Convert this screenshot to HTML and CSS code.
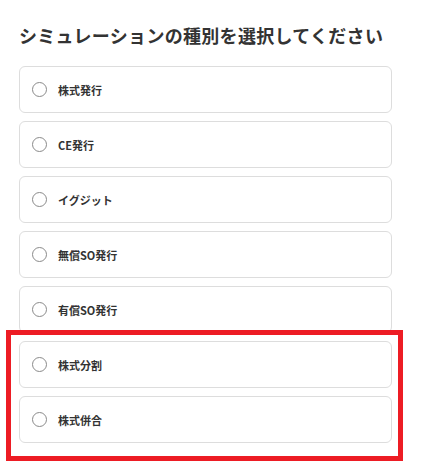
FILE: index.html
```html
<!DOCTYPE html>
<html lang="ja">
<head>
<meta charset="utf-8">
<link rel="stylesheet" href="styles.css">
</head>
<body>
<div class="page">
  <h1 class="title">シミュレーションの種別を選択してください</h1>
  <div class="options">
    <label class="option"><span class="radio"></span><span class="label">株式発行</span></label>
    <label class="option"><span class="radio"></span><span class="label">CE発行</span></label>
    <label class="option"><span class="radio"></span><span class="label">イグジット</span></label>
    <label class="option"><span class="radio"></span><span class="label">無償SO発行</span></label>
    <label class="option"><span class="radio"></span><span class="label">有償SO発行</span></label>
    <label class="option"><span class="radio"></span><span class="label">株式分割</span></label>
    <label class="option"><span class="radio"></span><span class="label">株式併合</span></label>
  </div>
  <div class="highlight"></div>
</div>
</body>
</html>
```
FILE: styles.css
```css
html, body {
  margin: 0;
  padding: 0;
  background: #ffffff;
}
body {
  font-family: "Noto Sans CJK JP", "Noto Sans", sans-serif;
  color: #333333;
  min-height: 468px;
}
.page {
  position: relative;
  width: 373px;
  padding: 22px 0 25px 19px;
}
.title {
  margin: 0;
  font-size: 18px;
  line-height: 26px;
  font-weight: 700;
  letter-spacing: 0.3px;
  color: #333333;
  white-space: nowrap;
}
.options {
  margin-top: 18px;
  display: flex;
  flex-direction: column;
  gap: 8px;
}
.option {
  box-sizing: border-box;
  height: 47px;
  display: flex;
  align-items: center;
  gap: 11px;
  padding-left: 12px;
  border: 1px solid #dddddd;
  border-radius: 6px;
  background: #ffffff;
}
.radio {
  box-sizing: border-box;
  width: 15px;
  height: 15px;
  border: 1px solid #8a8a8a;
  border-radius: 50%;
  flex: none;
}
.label {
  font-size: 11px;
  font-weight: 700;
  color: #333333;
  line-height: 16px;
}
.highlight {
  position: absolute;
  left: 6px;
  top: 330px;
  width: 397px;
  height: 131px;
  box-sizing: border-box;
  border: 5px solid #ed1c24;
}
```
